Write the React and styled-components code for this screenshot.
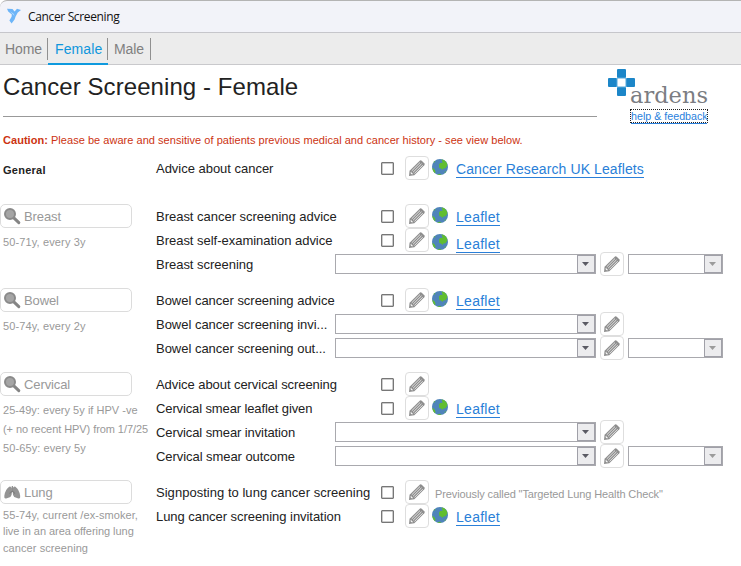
import React from 'react';
import styled, {createGlobalStyle} from "styled-components";

const sections = [
    {
        title: "General",
        height: 48,
        rows: [
            {label: "Advice about cancer", type: "check", link: "Cancer Research UK Leaflets"},
        ],
    },
    {
        search: "Breast",
        height: 84,
        notes: [{text: "50-71y, every 3y", h: 19, ls: 0.13}],
        rows: [
            {label: "Breast cancer screening advice", type: "check", link: "Leaflet"},
            {label: "Breast self-examination advice", type: "check", link: "Leaflet", low: true},
            {label: "Breast screening", type: "select", extra: true},
        ],
    },
    {
        search: "Bowel",
        height: 84,
        notes: [{text: "50-74y, every 2y", h: 19, ls: 0.13}],
        rows: [
            {label: "Bowel cancer screening advice", type: "check", link: "Leaflet"},
            {label: "Bowel cancer screening invi...", type: "select"},
            {label: "Bowel cancer screening out...", type: "select", extra: true},
        ],
    },
    {
        search: "Cervical",
        height: 108,
        notes: [
            {text: "25-49y: every 5y if HPV -ve", h: 19, ls: 0.03},
            {text: "(+ no recent HPV) from 1/7/25", h: 19, ls: -0.07},
            {text: "50-65y: every 5y", h: 19, ls: 0.1},
        ],
        rows: [
            {label: "Advice about cervical screening", ls: -0.06, type: "check"},
            {label: "Cervical smear leaflet given", ls: -0.12, type: "check", link: "Leaflet"},
            {label: "Cervical smear invitation", ls: -0.1, type: "select"},
            {label: "Cervical smear outcome", ls: -0.06, type: "select", extra: true},
        ],
    },
    {
        search: "Lung",
        icon: "lungs",
        height: 86,
        notes: [
            {text: "55-74y, current /ex-smoker,", h: 15, ls: 0.07},
            {text: "live in an area offering lung", h: 16, ls: -0.04},
            {text: "cancer screening", h: 19, ls: 0.08},
        ],
        rows: [
            {label: "Signposting to lung cancer screening", ls: 0.03, type: "check", hint: 'Previously called "Targeted Lung Health Check"'},
            {label: "Lung cancer screening invitation", ls: -0.05, type: "check", link: "Leaflet"},
        ],
    },
];

const Bird = () => (
    <svg width="15" height="16" viewBox="0 0 15 16">
        <path d="M0 .8 L5.5 1 L7.6 3.6 L10 .8 L14 2 L10.8 4.6 L8.6 8.4 L7.6 11.4 L4.6 15.6 L2.4 12.6 L4.6 8.8 L4.8 6.4 L1.2 3.6Z" fill="#6db5f8"/>
        <path d="M3 3.2 L6.4 5.6 L7.6 8 L6 6.4Z" fill="#b5dcff"/>
    </svg>
);

const Pencil = () => (
    <svg width="16" height="16" viewBox="0 0 16 16">
        <path d="M0 16 L.6 10.8 L11 .5 Q12 0 13 1 L15.5 3.5 Q16 4.5 15.3 5.3 L5.3 15.3 Z" fill="#8e8e8e"/>
        <path d="M2.7 10.9 L11 2.6 M4.1 12.2 L12.5 3.8 M5.4 13.5 L13.7 5.2" stroke="#fff" strokeWidth=".75" fill="none"/>
        <path d="M1.4 13 L2 12 L4 14 L3 14.5Z" fill="#fff"/>
    </svg>
);

const Globe = () => (
    <svg width="16" height="16" viewBox="0 0 16 16">
        <circle cx="8" cy="8" r="8" fill="#4f84ba"/>
        <path d="M9.5 .3 L12.8 1.6 L15 4.2 L15.3 6.8 L13.2 9.6 L11.6 9.2 L10.5 11 L9.4 9.8 L7.3 9 L7 5.6 L8.2 3.9 L10.6 3.7Z" fill="#60bd30"/>
        <path d="M.2 8.8 L2.2 10 L3.4 12 L3.2 14.4 L1.4 12.5Z M1.3 3.6 L3.2 1.7 L3 3.3Z M5 15.4 L8 14.8 L9.5 15.8 L7 16Z M12.5 13.2 L14.5 11.7 L13 14Z" fill="#60bd30"/>
    </svg>
);

const Magnifier = () => (
    <svg width="17" height="17" viewBox="0 0 17 17">
        <path d="M9.3 9.3 L14.8 14.6" stroke="#858585" strokeWidth="3" strokeLinecap="round"/>
        <circle cx="6" cy="6" r="5" fill="#a5a5a5" stroke="#8a8a8a" strokeWidth="2"/>
    </svg>
);

const Lungs = () => (
    <svg width="17" height="17" viewBox="0 0 17 17">
        <path d="M7.9 8.3 V4.2 Q7 2 5.2 2.7 Q1 5.5 .3 12 Q0 15 2.2 14.4 L6.4 13 Q7.9 12 7.9 8.3Z M8.7 8.3 V4.2 Q9.6 2 11.4 2.7 Q15.4 5.5 16.2 12 Q16.5 15 14.4 14.4 L10.2 13 Q8.7 12 8.7 8.3Z" fill="#949494"/>
        <path d="M8.3 2 V7 L5.5 9.6 M8.3 7 L11 9.6" stroke="#7f7f7f" strokeWidth="1.1" fill="none"/>
    </svg>
);

const Cross = () => (
    <svg width="27" height="27" viewBox="0 0 27 27">
        <g fill="#1c86c8">
            <rect x="9" y="0" width="9" height="9" rx="1"/>
            <rect x="0" y="9" width="9" height="9" rx="1"/>
            <rect x="18" y="9" width="9" height="9" rx="1"/>
            <rect x="9" y="18" width="9" height="9" rx="1"/>
        </g>
        <path d="M9 9h9v9h-9z" fill="#fff" stroke="#55a8dc" strokeWidth="1"/>
    </svg>
);

function Combo({small}) {
    return (
        <ComboBox $small={small}>
            <Arrow>
                <svg width="8" height="4" viewBox="0 0 8 4">
                    <path d="M0 0h7L3.5 4z" fill={small ? "#9b9b9b" : "#5b5b64"}/>
                </svg>
            </Arrow>
        </ComboBox>
    )
}

function Row({row}) {
    return (
        <Line>
            <Label $ls={row.ls || -0.02}>{row.label}</Label>
            {row.type === "check" ? (
                <>
                    <Check/>
                    <Edit><Pencil/></Edit>
                    {row.link && <World $low={row.low}><Globe/></World>}
                    {row.link && <Leaflet $low={row.low} $ls={row.link === "Leaflet" ? 0.28 : 0.1}>{row.link}</Leaflet>}
                    {row.hint && <Hint>{row.hint}</Hint>}
                </>
            ) : (
                <>
                    <Combo/>
                    <Edit $after><Pencil/></Edit>
                    {row.extra && <Combo small/>}
                </>
            )}
        </Line>
    )
}

export default function App() {
    return (
        <Page>
            <Global/>
            <TitleBar><Bird/><span>Cancer Screening</span></TitleBar>
            <Tabs>
                <Tab $w={48} $pad={5}>Home</Tab>
                <Tab $w={60} $pad={7} $active>Female</Tab>
                <Tab $w={43} $pad={6}>Male</Tab>
            </Tabs>
            <Header>
                <Heading><h1>Cancer Screening - Female</h1></Heading>
                <Brand>
                    <Logo><Cross/><span>ardens</span></Logo>
                    <Help><span>help &amp; feedback</span></Help>
                </Brand>
            </Header>
            <Caution><b>Caution:</b> Please be aware and sensitive of patients previous medical and cancer history - see view below.</Caution>
            {sections.map((s, i) => (
                <Section key={i} $height={s.height}>
                    <Side>
                        {s.title && <SideTitle>{s.title}</SideTitle>}
                        {s.search && <Search>{s.icon ? <Lungs/> : <Magnifier/>}<span>{s.search}</span></Search>}
                        <Notes $tight={s.icon}>
                            {s.notes && s.notes.map(n => <Note key={n.text} $h={n.h} $ls={n.ls}>{n.text}</Note>)}
                        </Notes>
                    </Side>
                    <div>{s.rows.map(r => <Row key={r.label} row={r}/>)}</div>
                </Section>
            ))}
        </Page>
    )
}

const Global = createGlobalStyle`
* { box-sizing: border-box; }
body {
    margin: 0;
    background: #fff;
    overflow: hidden;
    font-family: "Liberation Sans", Arial, sans-serif;
}
svg { display: block; flex: none; }
`;

const Page = styled.div`
width: 741px;
height: 566px;
overflow: hidden;
white-space: nowrap;
background: #fff;
`;

const TitleBar = styled.div`
height: 33px;
display: flex;
align-items: center;
padding: 0 0 2px 7px;
border-top: 1px solid #b4b4b4;
border-bottom: 1px solid #c6c6cb;
border-top-left-radius: 7px;
background: #f2f3f9;

span {
    margin: 2px 0 0 6px;
    font-family: "Open Sans", sans-serif;
    font-size: 12px;
    letter-spacing: -0.35px;
    color: #111;
}
`;

const Tabs = styled.div`
height: 32px;
display: flex;
background: #ececec;
border-bottom: 1px solid #c9c9cc;
`;

const Tab = styled.div`
width: ${p => p.$w}px;
height: 32px;
padding: 7px 0 0 ${p => p.$pad}px;
font-size: 14px;
line-height: 18px;
letter-spacing: ${p => p.$active ? 0.1 : -0.1}px;
color: ${p => p.$active ? "#0f96dc" : "#808080"};
border-bottom: ${p => p.$active ? "2px solid #0f9ade" : "none"};
background: linear-gradient(#909090, #909090) right 5px / 1px 22px no-repeat;
`;

const Header = styled.div`
height: 66px;
display: flex;
padding-left: 3px;
`;

const Heading = styled.div`
width: 594px;
height: 52px;
border-bottom: 1px solid #999;

h1 {
    margin: 7px 0 0;
    font-size: 24px;
    line-height: 30px;
    font-weight: 400;
    letter-spacing: 0.07px;
    color: #222;
}
`;

const Brand = styled.div`
margin-left: 11px;
padding-top: 4px;
`;

const Logo = styled.div`
display: flex;
height: 40px;

span {
    margin: 9px 0 0 -5px;
    font-family: "DejaVu Serif", serif;
    font-size: 22.5px;
    line-height: 34px;
    color: #7b7d82;
}
`;

const Help = styled.div`
width: 78px;
height: 14px;
margin-left: 22px;
border: 1px dotted #222;
font-size: 10.7px;
line-height: 13px;
color: #2a7fdc;

span {
    display: block;
    border-bottom: 1px solid #2a7fdc;
}
`;

const Caution = styled.div`
height: 25px;
padding: 2px 0 0 3px;
font-size: 11px;
line-height: 14px;
letter-spacing: 0.035px;
color: #cc3311;
`;

const Section = styled.div`
display: grid;
grid-template-columns: 156px 1fr;
height: ${p => p.$height}px;
`;

const Side = styled.div`
min-width: 0;
`;

const SideTitle = styled.div`
padding: 8px 0 0 3px;
font-size: 11px;
line-height: 13px;
font-weight: 700;
letter-spacing: 0.25px;
color: #222;
`;

const Search = styled.div`
width: 132px;
height: 24px;
display: flex;
align-items: center;
padding-left: 3px;
border: 1px solid #dcdcdc;
border-radius: 5px;
background: #fff;
font-size: 13px;
letter-spacing: -0.1px;
color: #999;

span {
    margin-left: 3px;
}
`;

const Notes = styled.div`
padding: ${p => p.$tight ? 4 : 5}px 0 0 3px;
`;

const Note = styled.div`
height: ${p => p.$h}px;
line-height: ${p => p.$h}px;
font-size: 11px;
letter-spacing: ${p => p.$ls}px;
color: #999;
`;

const Line = styled.div`
height: 24px;
display: flex;
align-items: center;
`;

const Label = styled.div`
width: 179px;
flex: none;
font-size: 13px;
letter-spacing: ${p => p.$ls}px;
color: #222;
`;

const Check = styled.div`
width: 13px;
height: 13px;
flex: none;
margin: 1px 11px 0 46px;
border: 1px solid #777;
border-radius: 1px;
box-shadow: inset 0 0 0 0.5px #999;
background: #fff;
`;

const Edit = styled.div`
width: 24px;
height: 24px;
flex: none;
display: flex;
align-items: center;
justify-content: center;
margin-left: ${p => p.$after ? 4 : 0}px;
margin-right: ${p => p.$after ? 4 : 0}px;
border: 1px solid #dedede;
border-radius: 4px;
background: #fff;
`;

const World = styled.div`
margin-left: 3px;
margin-top: ${p => p.$low ? 4 : -2}px;
`;

const Leaflet = styled.span`
margin-left: 8px;
margin-top: ${p => p.$low ? 10 : 3}px;
height: 16px;
font-size: 14px;
line-height: 15px;
letter-spacing: ${p => p.$ls}px;
color: #2a7fd8;
border-bottom: 1px solid #2a7fd8;
`;

const Hint = styled.span`
margin: 4px 0 0 6px;
font-size: 11px;
letter-spacing: -0.11px;
color: #999;
`;

const ComboBox = styled.div`
width: ${p => p.$small ? 95 : 261}px;
height: 20px;
flex: none;
display: flex;
justify-content: flex-end;
border: 1px solid #a9a9ae;
background: #fff;
`;

const Arrow = styled.div`
width: 18px;
height: 18px;
display: flex;
align-items: center;
justify-content: center;
border: 1px solid #a0a0a8;
background: #ececee;
`;
